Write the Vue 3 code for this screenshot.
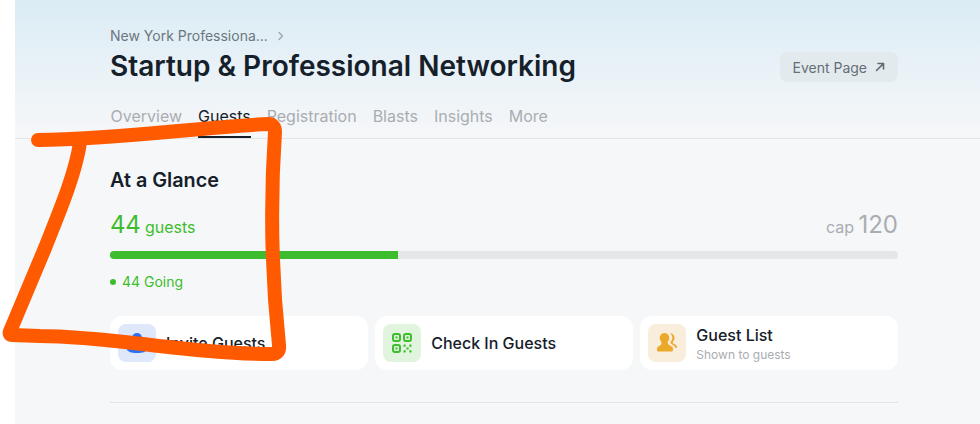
<script setup>
const tabs = ['Overview', 'Guests', 'Registration', 'Blasts', 'Insights', 'More']
const fillPercent = 36.5
</script>

<template>
  <div class="page">
    <div class="sheet">
      <header class="head">
        <div class="crumb">New York Professiona... <span class="chev">
          <svg width="8" height="10" viewBox="0 0 8 10"><path d="M2 1.500 5.500 5 2 8.500" fill="none" stroke="#9aa2a8" stroke-width="1.200" stroke-linecap="round" stroke-linejoin="round"/></svg>
        </span></div>
        <div class="title-row">
          <h1>Startup &amp; Professional Networking</h1>
          <a class="event-btn">Event Page
            <svg width="10" height="10" viewBox="0 0 10 10"><path d="M1.500 8.500 8 2M3 1.500h5.500V7" fill="none" stroke="#5f6b73" stroke-width="1.600" stroke-linecap="round" stroke-linejoin="round"/></svg>
          </a>
        </div>
        <nav class="tabs">
          <span v-for="t in tabs" :key="t" :class="['tab', { active: t === 'Guests' }]">{{ t }}</span>
        </nav>
      </header>

      <main class="content">
        <h2>At a Glance</h2>
        <div class="stats">
          <div class="count"><b>44</b> guests</div>
          <div class="cap">cap <b>120</b></div>
        </div>
        <div class="bar"><div class="fill" :style="{ width: fillPercent + '%' }"></div></div>
        <div class="going"><i></i>44 Going</div>

        <div class="cards">
          <div class="card">
            <div class="ico blue">
              <svg width="22" height="22" viewBox="0 0 22 22" fill="#2e6ff2">
                <circle cx="11" cy="6" r="5"/>
                <path d="M1 17c0-3 4-6 10-6s10 3 10 6c0 2.500-4 4-10 4S1 19.500 1 17z"/>
              </svg>
            </div>
            <div class="label">Invite Guests</div>
          </div>
          <div class="card">
            <div class="ico green">
              <svg width="20" height="20" viewBox="0 0 20 20" fill="none" stroke="#3dbd2d" stroke-width="2">
                <rect x="1" y="1" width="7" height="7" rx="2"/>
                <rect x="12" y="1" width="7" height="7" rx="2"/>
                <rect x="1" y="12" width="7" height="7" rx="2"/>
                <g fill="#3dbd2d" stroke="none">
                  <rect x="3.500" y="3.500" width="2" height="2"/>
                  <rect x="14.500" y="3.500" width="2" height="2"/>
                  <rect x="3.500" y="14.500" width="2" height="2"/>
                  <rect x="11.500" y="11.500" width="2.200" height="2.200" rx=".5"/>
                  <rect x="17.300" y="11.500" width="2.200" height="2.200" rx=".5"/>
                  <rect x="14.400" y="14.400" width="2.200" height="2.200" rx=".5"/>
                  <rect x="11.500" y="17.300" width="2.200" height="2.200" rx=".5"/>
                  <rect x="17.300" y="17.300" width="2.200" height="2.200" rx=".5"/>
                </g>
              </svg>
            </div>
            <div class="label">Check In Guests</div>
          </div>
          <div class="card">
            <div class="ico amber">
              <svg width="24" height="24" viewBox="0 0 24 24" fill="#eba82b">
                <ellipse cx="9.500" cy="7" rx="4.800" ry="5"/>
                <path d="M6.500 10.500h6c.3 2 .8 3.200 2.500 4 2 1 3 2 3 3.500v1c0 1-.8 1.500-2 1.500H4c-1.200 0-2-.5-2-1.500v-1c0-1.500 1-2.500 3-3.500 1.700-.8 1.400-2 1.500-4z"/>
                <path d="M15 2.200c2.500 0 4.500 2 4.500 4.600 0 1.800-.8 3-1.700 3.900-.4.800 0 1.500 1 2 1.800.9 3.200 1.700 3.200 3.100 0 .8-.6 1.200-1.500 1.200-.6-1.700-2-2.800-3.600-3.700-1.200-.6-1.500-1.400-1.400-2.600 1-1 1.900-2.200 1.900-3.900 0-1.700-.8-3.200-2.400-4.600z"/>
              </svg>
            </div>
            <div>
              <div class="label">Guest List</div>
              <div class="sub">Shown to guests</div>
            </div>
          </div>
        </div>

        <hr class="rule" />
      </main>

      <svg class="scribble" width="980" height="424" viewBox="0 0 980 424">
        <path d="M38 140C120 139 200 127 268 124Q275 124 275 132C271 190 270 260 279 345Q280 354 272 354C190 354 110 336 40 336L12 335C8 335 10 331 11 329L45 248C60 210 75 175 80 143" fill="none" stroke="#ff5a00" stroke-width="14" stroke-linecap="round" stroke-linejoin="round"/>
      </svg>
    </div>
  </div>
</template>

<style>
body {
  background: #fff;
}
</style>

<style scoped>
.page {
  width: 980px;
  height: 424px;
  overflow: hidden;
  padding-left: 15px;
  box-sizing: border-box;
  font-family: Inter, "Liberation Sans", sans-serif;
}

.sheet {
  position: relative;
  width: 965px;
  height: 424px;
  background: #f6f7f9;
}

.head {
  height: 139px;
  box-sizing: border-box;
  padding: 27px 82px 0 95px;
  border-bottom: 1px solid #e2e4e6;
  background: linear-gradient(#dbecf5, #f6f7f9);
}

.crumb {
  font-size: 14px;
  line-height: 17px;
  color: #6b7780;
}

.chev {
  margin-left: 5px;
}

.title-row {
  display: flex;
  justify-content: space-between;
  align-items: center;
  margin-top: 4px;
}

h1 {
  margin: 0;
  font-size: 28px;
  line-height: 36px;
  font-weight: 600;
  color: #15202a;
}

.event-btn {
  display: flex;
  align-items: center;
  gap: 8px;
  height: 30px;
  margin-top: 2px;
  padding: 0 13px 0 12px;
  border-radius: 8px;
  background: #e3eaee;
  font-size: 14px;
  color: #636e76;
}

.tabs {
  display: flex;
  gap: 16px;
  margin-top: 19px;
  margin-left: 0.5px;
}

.tab {
  height: 35px;
  font-size: 16px;
  line-height: 26px;
  color: #a9adb1;
  box-sizing: border-box;
}

.tab.active {
  color: #15202a;
  border-bottom: 2px solid #15202a;
}

.content {
  padding: 28px 82px 0 95px;
}

h2 {
  margin: 0;
  font-size: 19.800px;
  line-height: 26px;
  font-weight: 600;
  color: #15202a;
}

.stats {
  display: flex;
  justify-content: space-between;
  align-items: baseline;
  margin-top: 17px;
}

.count {
  font-size: 16px;
  color: #3dbd2d;
}

.count b {
  font-size: 24px;
  font-weight: 400;
  letter-spacing: -0.3px;
}

.cap {
  font-size: 16px;
  color: #a9adb1;
}

.cap b {
  font-size: 24px;
  font-weight: 400;
}

.bar {
  height: 8px;
  margin-top: 12px;
  border-radius: 4px;
  background: #e5e6e8;
  overflow: hidden;
}

.fill {
  height: 100%;
  background: #3dbd2d;
}

.going {
  display: flex;
  align-items: center;
  gap: 6px;
  margin-top: 14px;
  font-size: 14px;
  line-height: 17px;
  color: #3dbd2d;
}

.going i {
  width: 6px;
  height: 6px;
  border-radius: 50%;
  background: #3dbd2d;
}

.cards {
  display: grid;
  grid-template-columns: repeat(3, 1fr);
  gap: 7.500px;
  margin-top: 26px;
}

.card {
  display: flex;
  align-items: center;
  gap: 10px;
  height: 54px;
  padding: 0 8px;
  box-sizing: border-box;
  background: #fff;
  border-radius: 12px;
}

.ico {
  width: 38px;
  height: 38px;
  border-radius: 8px;
  display: flex;
  align-items: center;
  justify-content: center;
}

.blue {
  background: #dfe7fb;
}

.green {
  background: #e1f4dd;
}

.amber {
  background: #f8eedb;
}

.label {
  font-size: 16px;
  line-height: 20px;
  font-weight: 500;
  color: #15202a;
}

.sub {
  margin-top: 3px;
  font-size: 12px;
  line-height: 14px;
  color: #a9adb1;
}

.rule {
  margin: 32px 0 0;
  border: 0;
  border-top: 1px solid #e2e4e6;
}

.scribble {
  position: absolute;
  left: -15px;
  top: 0;
  pointer-events: none;
}
</style>
